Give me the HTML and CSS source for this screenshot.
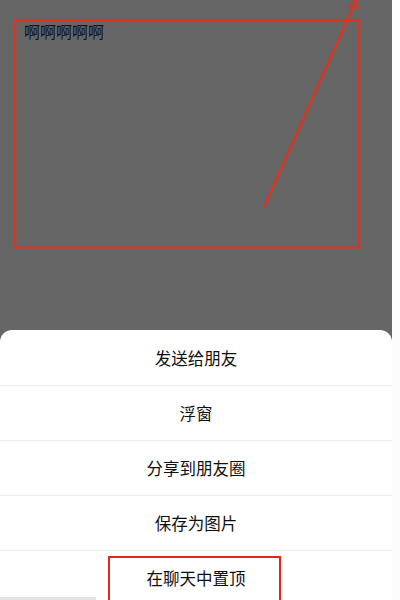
FILE: index.html
```html
<!DOCTYPE html>
<html lang="zh">

<head>
    <meta charset="UTF-8">
    <meta name="viewport" content="width=device-width, initial-scale=1.0">
    <title>长按菜单</title>
    <link rel="stylesheet" href="styles.css">
</head>

<body>
    <div class="screen">
        <!-- Dimmed message area -->
        <div class="backdrop">
            <p class="note">啊啊啊啊啊</p>
        </div>

        <!-- Action sheet -->
        <div class="sheet">
            <div class="item">发送给朋友</div>
            <div class="item">浮窗</div>
            <div class="item">分享到朋友圈</div>
            <div class="item">保存为图片</div>
            <div class="item">在聊天中置顶</div>
        </div>

        <div class="home-bar"></div>

        <!-- Red annotations drawn on top of the screenshot -->
        <svg class="marks" width="392" height="600" viewBox="0 0 392 600">
            <rect x="15" y="20.5" width="344" height="227" fill="none" stroke="#e2321f" stroke-width="2.2" />
            <line x1="264" y1="207" x2="354" y2="5" stroke="#e2321f" stroke-width="2.2" />
            <polygon points="356,-1 349,7 358,8" fill="none" stroke="#e2321f" stroke-width="1.8" />
            <rect x="109" y="557" width="171" height="50" fill="none" stroke="#e8231d" stroke-width="2" />
        </svg>
    </div>
</body>

</html>
```

FILE: styles.css
```css
/* Reset */
* {
    margin: 0;
    padding: 0;
    box-sizing: border-box;
}

body {
    background-color: #fcfcfc;
    font-family: "Noto Sans CJK SC", "Noto Sans", sans-serif;
    overflow: hidden;
}

.screen {
    position: relative;
    width: 392px;
    height: 600px;
    background-color: #666666;
    display: flex;
    flex-direction: column;
    overflow: hidden;
}

/* Top area */
.backdrop {
    height: 330px;
    flex-shrink: 0;
    padding: 21px 0 0 24px;
}

.note {
    font-size: 16px;
    line-height: 20px;
    color: #111111;
}

/* Action sheet */
.sheet {
    flex-shrink: 0;
    background-color: #ffffff;
    border-radius: 12px 12px 0 0;
    padding-top: 1px;
}

.item {
    height: 55px;
    display: flex;
    align-items: center;
    justify-content: center;
    font-size: 16.5px;
    color: #0f0f0f;
    border-bottom: 1px solid #efefef;
}

.home-bar {
    position: absolute;
    left: 0;
    bottom: 0;
    width: 96px;
    height: 3px;
    background-color: #e4e4e6;
}

.marks {
    position: absolute;
    top: 0;
    left: 0;
}
```
